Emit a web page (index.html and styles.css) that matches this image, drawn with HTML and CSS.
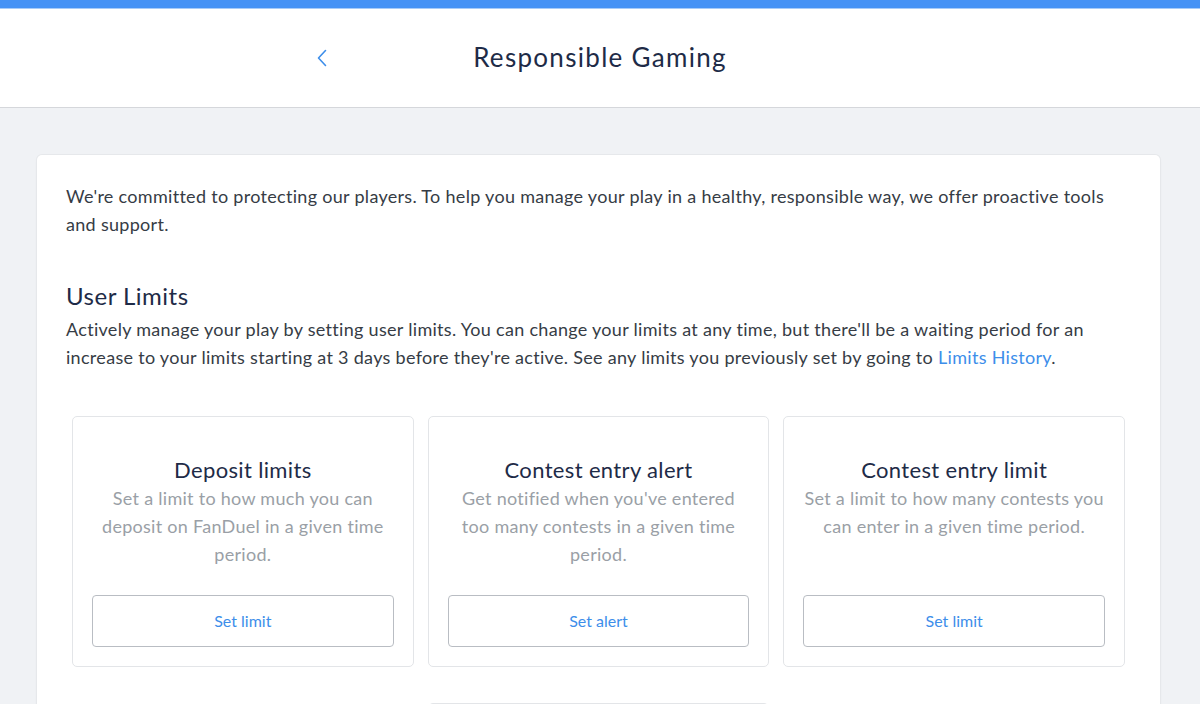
FILE: index.html
```html
<!DOCTYPE html>
<html lang="en">
<head>
<meta charset="utf-8">
<title>Responsible Gaming</title>
<link rel="stylesheet" href="styles.css">
</head>
<body>
<div class="topbar"></div>
<header class="header">
  <a class="back" href="#" aria-label="Back">
    <svg width="12" height="18" viewBox="0 0 12 18"><path d="M9.5 1.5 L2.5 9 L9.5 16.5" fill="none" stroke="#3d8eea" stroke-width="1.6" stroke-linecap="round" stroke-linejoin="round"/></svg>
  </a>
  <h1 class="title">Responsible Gaming</h1>
</header>
<main class="main">
  <section class="card">
    <p class="intro">We're committed to protecting our players. To help you manage your play in a healthy, responsible way, we offer proactive tools and support.</p>
    <h2 class="section-title">User Limits</h2>
    <p class="section-text">Actively manage your play by setting user limits. You can change your limits at any time, but there'll be a waiting period for an increase to your limits starting at 3 days before they're active. See any limits you previously set by going to <a class="link" href="#">Limits History</a>.</p>
    <div class="tiles">
      <div class="tile">
        <h3 class="tile-title">Deposit limits</h3>
        <p class="tile-text">Set a limit to how much you can deposit on FanDuel in a given time period.</p>
        <button class="tile-btn">Set limit</button>
      </div>
      <div class="tile">
        <h3 class="tile-title">Contest entry alert</h3>
        <p class="tile-text">Get notified when you've entered too many contests in a given time period.</p>
        <button class="tile-btn">Set alert</button>
      </div>
      <div class="tile">
        <h3 class="tile-title">Contest entry limit</h3>
        <p class="tile-text">Set a limit to how many contests you can enter in a given time period.</p>
        <button class="tile-btn">Set limit</button>
      </div>
      <div class="tile tile-center">
        <h3 class="tile-title">Entry fee limit</h3>
        <p class="tile-text">Set a limit to the entry fee of contests you can enter.</p>
        <button class="tile-btn">Set limit</button>
      </div>
    </div>
  </section>
</main>
</body>
</html>
```
FILE: styles.css
```css
* { box-sizing: border-box; }
html, body { margin: 0; padding: 0; }
body {
  background: #f0f2f5;
  font-family: Lato, "Open Sans", Arial, sans-serif;
  color: #363c45;
}
.topbar {
  height: 9px;
  background: #4592f5;
  border-bottom: 1px solid #a7cbf8;
}
.header {
  height: 99px;
  background: #fff;
  border-bottom: 1px solid #d5d7db;
  display: flex;
  align-items: center;
  justify-content: center;
  position: relative;
}
.back {
  position: absolute;
  left: 316px;
  top: 40px;
  display: flex;
}
.title {
  margin: 0 0 2px 0;
  font-size: 26px;
  font-weight: 400;
  color: #1e2b47;
  letter-spacing: 1.3px;
}
.main {
  padding: 47px 40px 0 37px;
}
.card {
  background: #fff;
  border-radius: 5px;
  box-shadow: 0 0 0 1px #e6e8eb, 0 1px 3px rgba(0,0,0,0.06);
  padding: 27px 29px 40px 29px;
}
.intro, .section-text {
  margin: 0;
  font-size: 18px;
  line-height: 28px;
  color: #363c45;
  letter-spacing: 0.3px;
}
.section-title {
  margin: 43px 0 4px 0;
  font-size: 24px;
  line-height: 30px;
  font-weight: 400;
  color: #1e2b47;
  letter-spacing: 0.5px;
}
.link { color: #3d8eea; text-decoration: none; }
.tiles {
  display: grid;
  grid-template-columns: repeat(3, 1fr);
  column-gap: 14px;
  row-gap: 36px;
  padding: 0 6px;
  margin-top: 45px;
}
.tile {
  border: 1px solid #e3e5e8;
  border-radius: 5px;
  padding: 39px 19px 19px 19px;
  display: flex;
  flex-direction: column;
  align-items: stretch;
  text-align: center;
}
.tile-center { grid-column: 2; }
.tile-title {
  margin: 0;
  font-size: 22px;
  line-height: 28px;
  font-weight: 400;
  color: #1e2b47;
  letter-spacing: 0.35px;
}
.tile-text {
  margin: 0 0 27px 0;
  font-size: 18px;
  line-height: 28px;
  color: #9a9fa6;
  letter-spacing: 0.28px;
}
.tile-btn {
  margin-top: auto;
  height: 52px;
  flex-shrink: 0;
  background: #fff;
  border: 1px solid #b9bdc3;
  border-radius: 4px;
  font-family: inherit;
  font-size: 16px;
  color: #3d8eea;
  cursor: pointer;
  padding-bottom: 3px;
}
```
